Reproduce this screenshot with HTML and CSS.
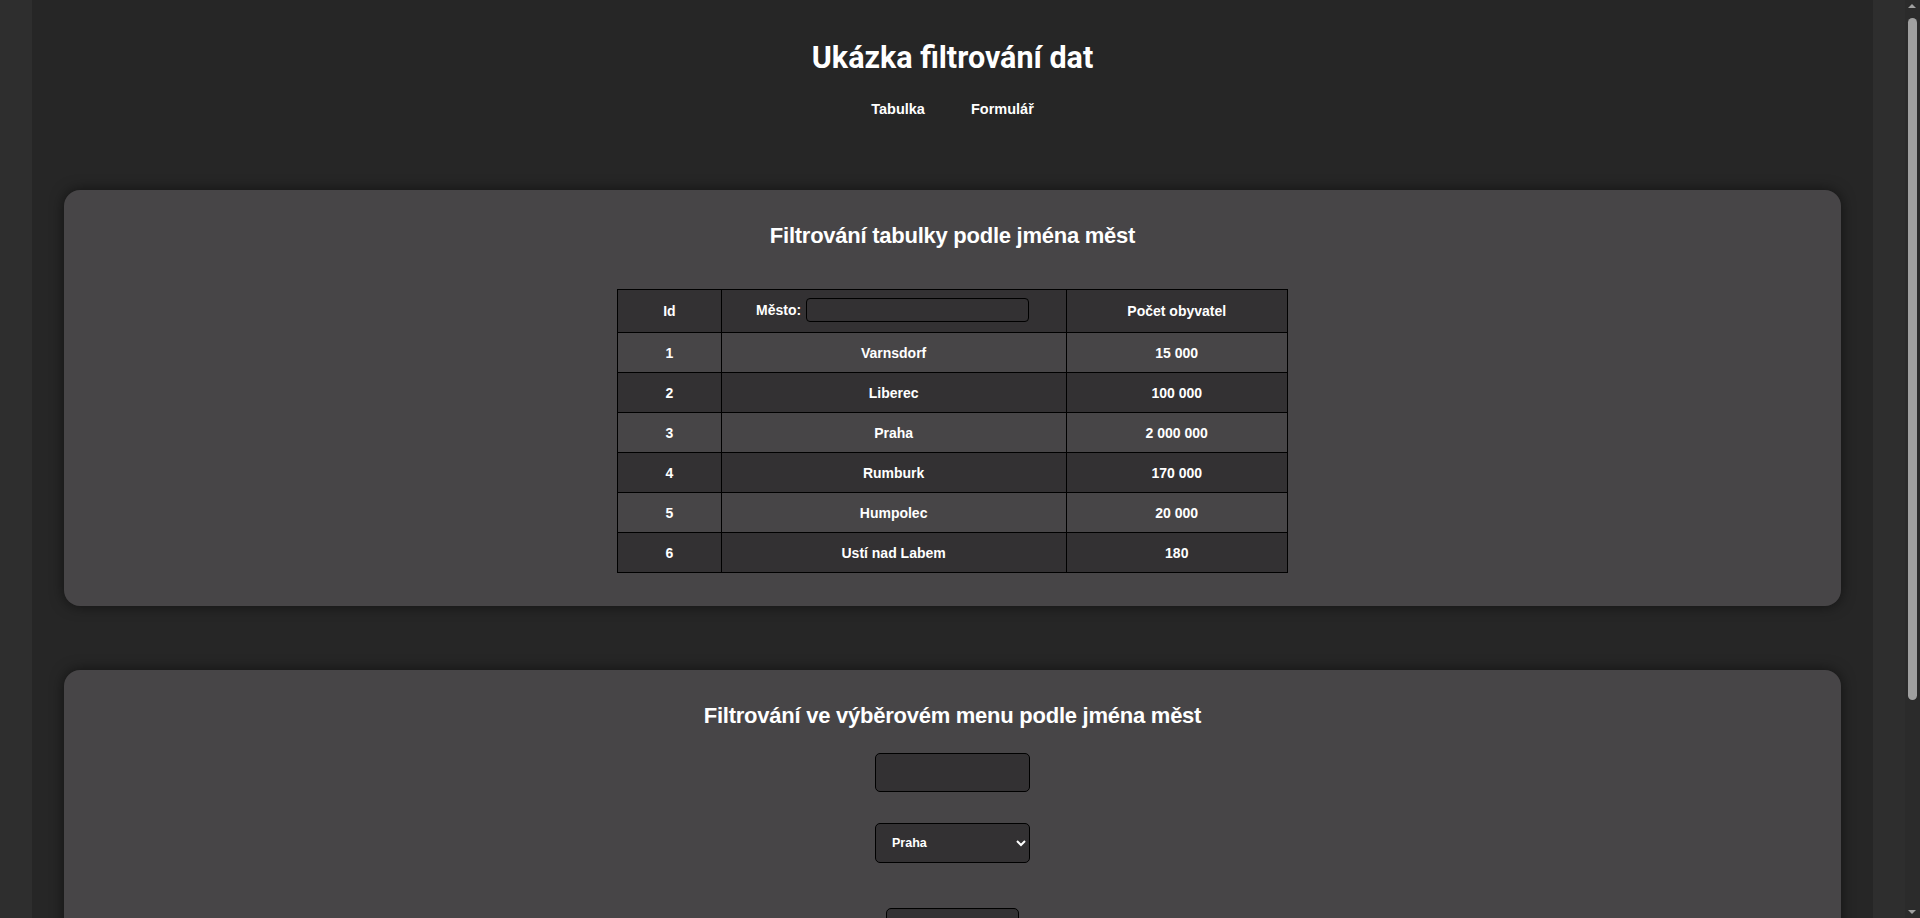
FILE: index.html
```html
<!DOCTYPE html>
<html lang="cs">
<head>
<meta charset="utf-8">
<title>Ukázka filtrování dat</title>
<link rel="stylesheet" href="styles.css">
</head>
<body>
<header class="page-header">
  <h1 class="page-title">Ukázka filtrování dat</h1>
  <nav class="nav">
    <a class="nav-link" href="#tabulka">Tabulka</a>
    <a class="nav-link" href="#formular">Formulář</a>
  </nav>
</header>
<main class="content">
  <section class="card card-table" id="tabulka">
    <h2 class="card-title">Filtrování tabulky podle jména měst</h2>
    <table class="cities">
      <thead>
        <tr>
          <th class="col-id">Id</th>
          <th class="col-city"><label class="city-label">Město: <input class="city-filter" type="text"></label></th>
          <th class="col-pop">Počet obyvatel</th>
        </tr>
      </thead>
      <tbody>
        <tr><td>1</td><td>Varnsdorf</td><td>15 000</td></tr>
        <tr><td>2</td><td>Liberec</td><td>100 000</td></tr>
        <tr><td>3</td><td>Praha</td><td>2 000 000</td></tr>
        <tr><td>4</td><td>Rumburk</td><td>170 000</td></tr>
        <tr><td>5</td><td>Humpolec</td><td>20 000</td></tr>
        <tr><td>6</td><td>Ustí nad Labem</td><td>180</td></tr>
      </tbody>
    </table>
  </section>
  <section class="card card-form" id="formular">
    <h2 class="card-title">Filtrování ve výběrovém menu podle jména měst</h2>
    <form class="filter-form">
      <input class="form-input" type="text">
      <select class="form-select">
        <option>Varnsdorf</option>
        <option>Liberec</option>
        <option selected>Praha</option>
        <option>Rumburk</option>
        <option>Humpolec</option>
        <option>Ustí nad Labem</option>
      </select>
      <button class="form-button" type="button"></button>
    </form>
  </section>
</main>
<div class="fake-scrollbar" aria-hidden="true">
  <span class="sb-arrow sb-up"></span>
  <span class="sb-thumb"></span>
  <span class="sb-arrow sb-down"></span>
</div>
</body>
</html>
```
FILE: styles.css
```css
html {
  background: #2e2e2e;
  color-scheme: dark;
}
body {
  margin: 0 47px 0 32px;
  padding: 40px 0 64px;
  background: #262626;
  color: #ffffff;
  font-family: "Liberation Sans", Arial, sans-serif;
}
.page-header {
  display: flex;
  flex-direction: column;
  align-items: center;
}
.page-title {
  margin: 0;
  font-family: Roboto, "Liberation Sans", sans-serif;
  font-weight: 700;
  font-size: 30.5px;
  line-height: 36px;
}
.nav {
  display: flex;
  gap: 46px;
  margin-top: 23px;
}
.nav-link {
  color: #ffffff;
  text-decoration: none;
  font-weight: 700;
  font-size: 14.5px;
  line-height: 20px;
}
.content {
  display: flex;
  flex-direction: column;
  gap: 64px;
  margin: 71px 32px 0;
}
.card {
  background: #474547;
  border-radius: 16px;
  box-shadow: 0 0 14px rgba(0, 0, 0, 0.55);
  display: flex;
  flex-direction: column;
  align-items: center;
  padding: 32px 0 33px;
}
.card-title {
  margin: 0;
  font-size: 22px;
  line-height: 28px;
  font-weight: 700;
  letter-spacing: -0.25px;
}
.cities {
  margin-top: 39px;
  border-collapse: collapse;
  width: 671px;
  font-size: 14px;
  font-weight: 700;
  text-align: center;
}
.cities th,
.cities td {
  border: 1px solid #000000;
  padding: 0;
}
.cities th {
  height: 42px;
  background: #333133;
}
.cities td {
  height: 39px;
}
.cities tbody tr:nth-child(even) td {
  background: #333133;
}
.col-id { width: 103px; }
.col-city { width: 344px; }
.col-pop { width: 221px; }
.city-label {
  display: inline-flex;
  align-items: center;
  gap: 5px;
  position: relative;
  top: -1px;
  left: -1px;
}
.city-filter {
  width: 223px;
  height: 24px;
  box-sizing: border-box;
  background: #333133;
  border: 1px solid #000000;
  border-radius: 4px;
  color: #ffffff;
}
.filter-form {
  display: flex;
  flex-direction: column;
  align-items: center;
  margin-top: 23px;
  padding-bottom: 150px;
}
.form-input,
.form-select,
.form-button {
  box-sizing: border-box;
  background: #333133;
  border: 1px solid #000000;
  border-radius: 5px;
  color: #ffffff;
}
.form-input {
  width: 155px;
  height: 39px;
}
.form-select {
  width: 155px;
  height: 40px;
  margin-top: 31px;
  padding: 0 8px 0 12px;
  font-family: "Liberation Sans", Arial, sans-serif;
  font-size: 12.5px;
  font-weight: 700;
}
.form-button {
  width: 133px;
  height: 40px;
  margin-top: 45px;
}
.fake-scrollbar {
  position: fixed;
  top: 0;
  right: 0;
  width: 15px;
  height: 100%;
  background: #2b2b2b;
}
.sb-thumb {
  position: absolute;
  top: 18px;
  left: 3px;
  width: 9px;
  height: 682px;
  border-radius: 5px;
  background: #a0a0a0;
}
.sb-arrow {
  position: absolute;
  left: 3px;
  width: 0;
  height: 0;
  border-left: 4.5px solid transparent;
  border-right: 4.5px solid transparent;
}
.sb-up {
  top: 4px;
  border-bottom: 4px solid #a0a0a0;
}
.sb-down {
  bottom: 4px;
  border-top: 4px solid #a0a0a0;
}
```
